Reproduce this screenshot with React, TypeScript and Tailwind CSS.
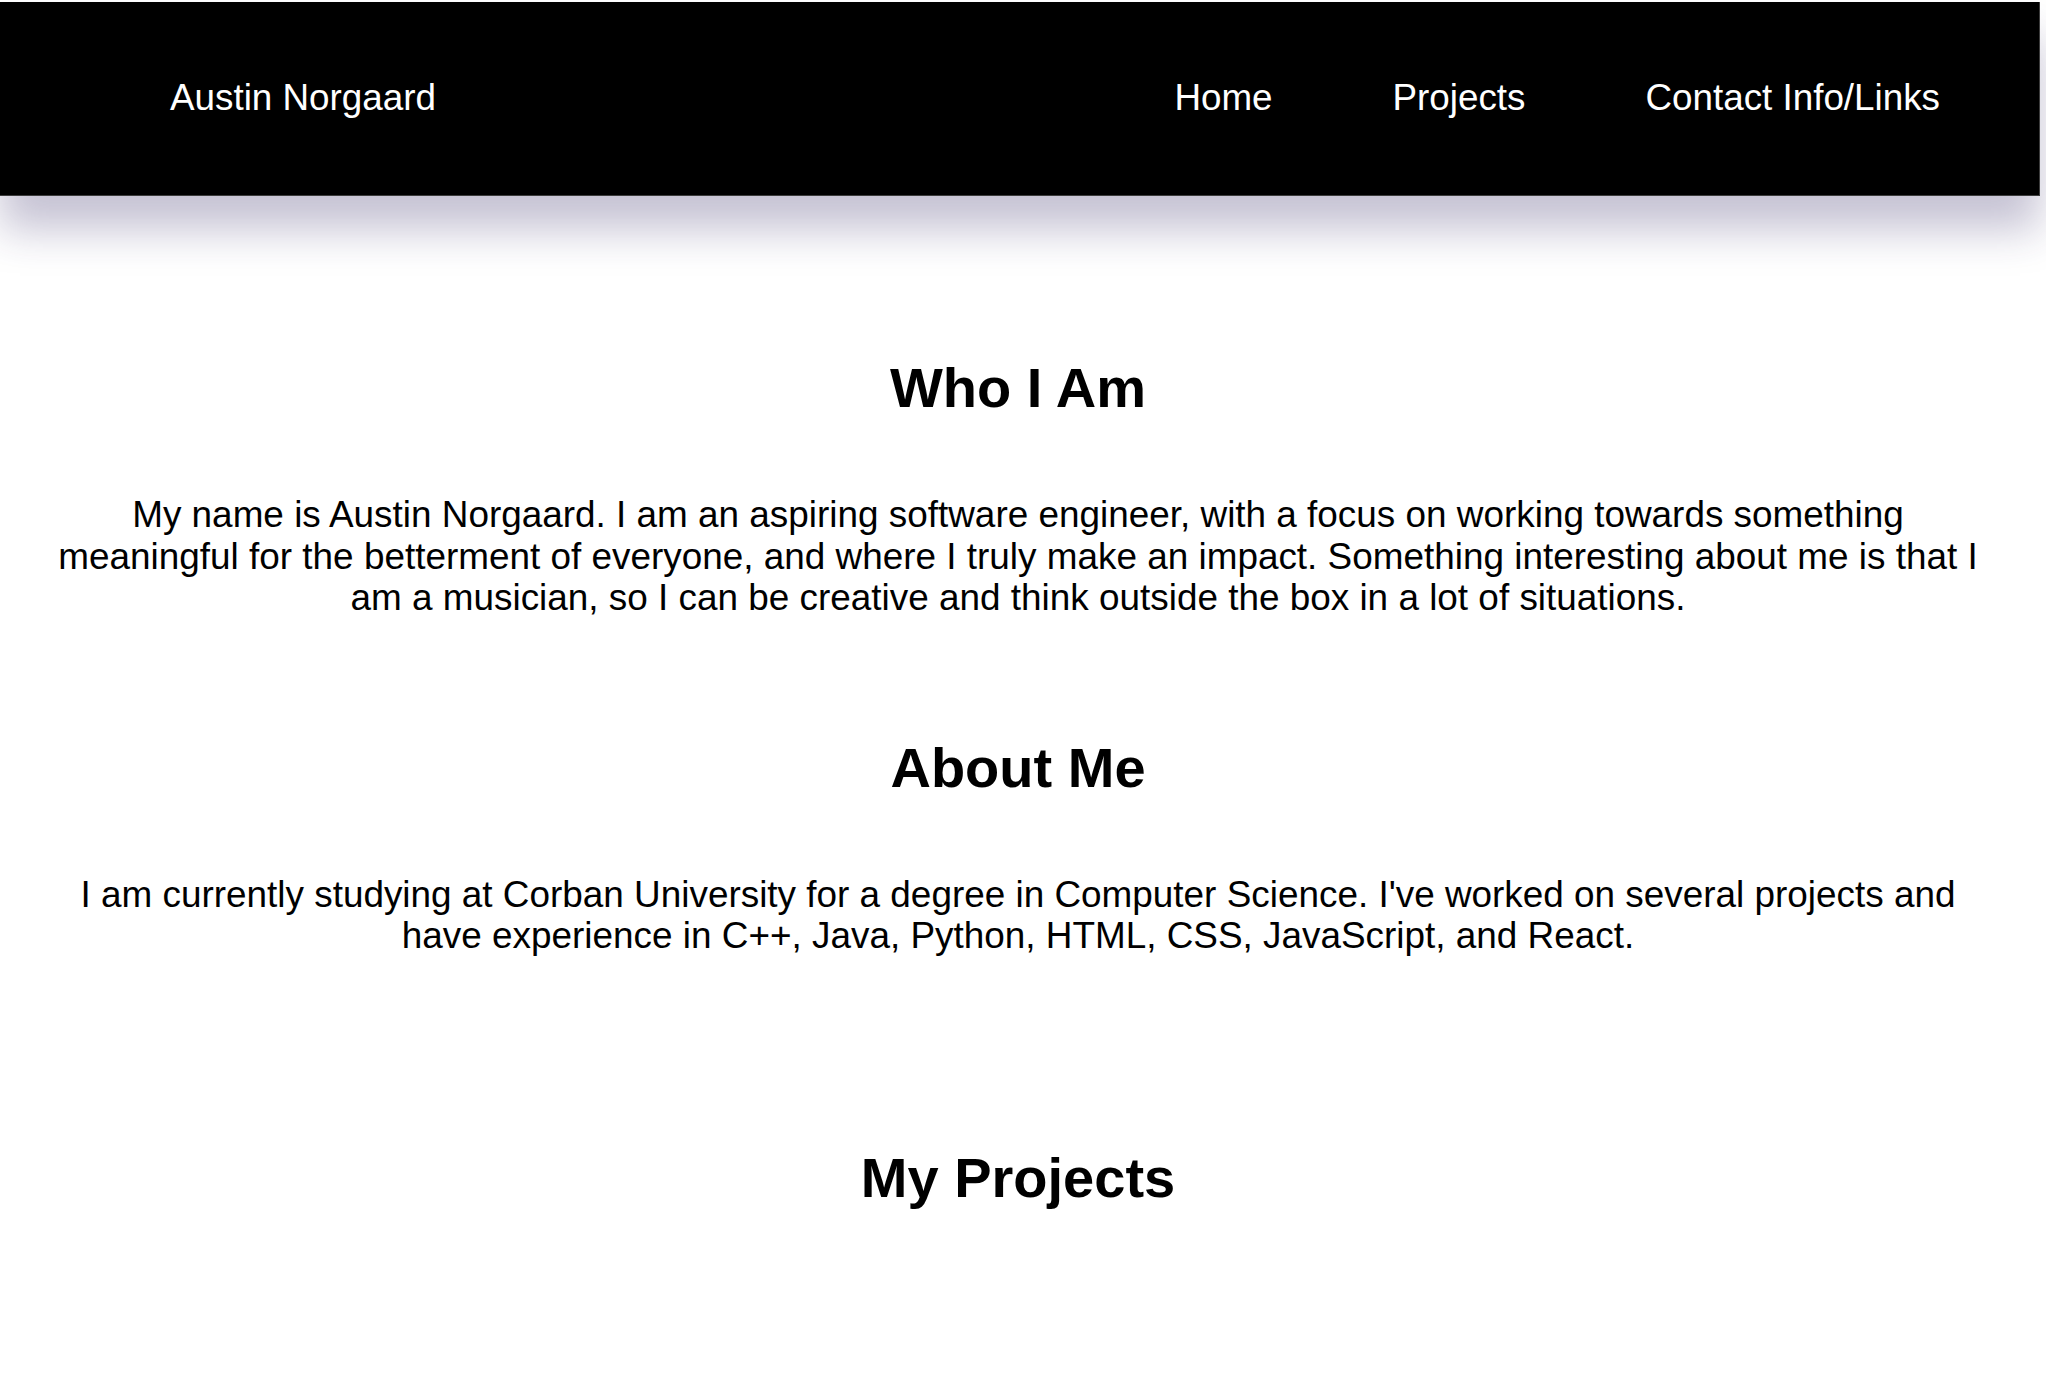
const navLinks = ["Home", "Projects", "Contact Info/Links"];

function Header() {
    return (
        <header className="mt-[2px] flex h-[194px] w-[2040px] items-center justify-between border-r border-b border-[#3c3c3c] bg-black pl-[170px] pr-[99px] text-white shadow-[0_34px_40px_rgba(45,35,95,0.27)]">
            <a href="#" className="text-[36.8px] leading-none">Austin Norgaard</a>
            <nav className="flex gap-[120px]">
                {navLinks.map((link) => (
                    <a key={link} href="#" className="text-[36.8px] leading-none">
                        {link}
                    </a>
                ))}
            </nav>
        </header>
    );
}

export default function App() {
    return (
        <div className="min-h-screen bg-white font-['Liberation_Sans',Arial,sans-serif] text-black">
            <Header />

            <main className="w-[2036px] px-[50px] text-center">
                <section>
                    <h2 className="mt-[160px] text-[56px] font-bold leading-[64px]">Who I Am</h2>
                    <p className="mt-[74px] text-[36.9px] leading-[41.5px]">
                        My name is Austin Norgaard. I am an aspiring software engineer, with a focus on working towards
                        something meaningful for the betterment of everyone, and where I truly make an impact. Something
                        interesting about me is that I am a musician, so I can be creative and think outside the box in a
                        lot of situations.
                    </p>
                </section>

                <section>
                    <h2 className="mt-[117px] text-[56px] font-bold leading-[64px]">About Me</h2>
                    <p className="mt-[74px] text-[36.9px] leading-[41.5px]">
                        I am currently studying at Corban University for a degree in Computer Science. I've worked on
                        several projects and have experience in C++, Java, Python, HTML, CSS, JavaScript, and React.
                    </p>
                </section>

                <section className="pb-[120px]">
                    <h2 className="mt-[189px] text-[56px] font-bold leading-[64px]">My Projects</h2>
                </section>
            </main>
        </div>
    );
}
